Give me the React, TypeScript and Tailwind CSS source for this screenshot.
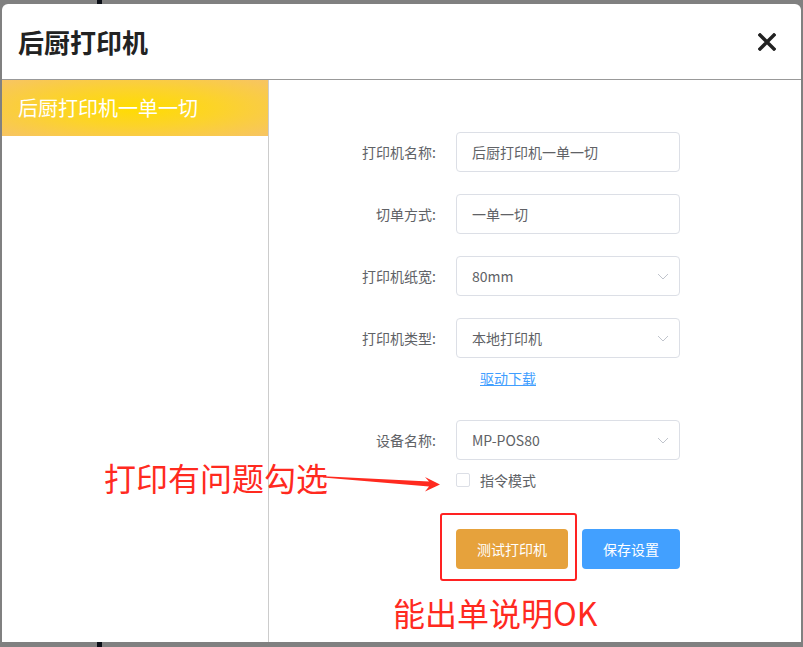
import React from "react";

const font = { fontFamily: '"Noto Sans CJK SC", "Noto Sans", sans-serif' };

function Chevron() {
  return (
    <svg width="12" height="7" viewBox="0 0 12 7" className="ml-auto mr-[10px]">
      <path d="M1 1 L6 6 L11 1" fill="none" stroke="#c0c4cc" strokeWidth="1" />
    </svg>
  );
}

function Row({ label, value, select }: { label: string; value: string; select?: boolean }) {
  return (
    <div className="flex items-center h-[40px]">
      <div className="w-[100px] text-right text-[14px] text-[#606266] leading-none">{label}</div>
      <div className="ml-[20px] w-[224px] h-[40px] border border-[#dcdfe6] rounded-[4px] flex items-center pl-[15px] text-[14px] text-[#606266]">
        <span>{value}</span>
        {select && <Chevron />}
      </div>
    </div>
  );
}

export default function App() {
  return (
    <div className="relative w-[803px] h-[647px] bg-[#808080] overflow-hidden pt-[4px] pl-[2px]" style={font}>
      <div className="absolute left-[97px] top-0 w-[5px] h-[647px] bg-[#0b0f17]" />
      <div className="relative w-[799px] h-[638px] bg-white rounded-t-[6px] flex flex-col">
        <div className="h-[76px] shrink-0 border-b border-[#999] flex items-center justify-between pl-[16px] pr-[25px]">
          <div className="text-[26px] font-bold text-[#222] leading-none">后厨打印机</div>
          <svg width="18" height="18" viewBox="0 0 18 18">
            <path d="M2 2 L16 16 M16 2 L2 16" stroke="#222" strokeWidth="3.4" strokeLinecap="square" />
          </svg>
        </div>
        <div className="flex flex-1">
          <div className="w-[267px] border-r border-[#ccc] shrink-0">
            <div className="h-[56px] flex items-center pl-[16px] text-white text-[20px] bg-[radial-gradient(ellipse_at_center,#ffdc00_0%,#fcd32a_45%,#f7c464_100%)]">
              后厨打印机一单一切
            </div>
          </div>
          <div className="flex-1 pl-[67px] pt-[52px]">
            <div className="flex flex-col gap-[22px]">
              <Row label="打印机名称:" value="后厨打印机一单一切" />
              <Row label="切单方式:" value="一单一切" />
              <Row label="打印机纸宽:" value="80mm" select />
              <Row label="打印机类型:" value="本地打印机" select />
            </div>
            <div className="mt-[10px] h-[20px] flex items-center pl-[144px]">
              <span className="text-[14px] text-[#409eff] underline leading-none">驱动下载</span>
            </div>
            <div className="mt-[32px]">
              <Row label="设备名称:" value="MP-POS80" select />
            </div>
            <div className="mt-[12px] h-[16px] flex items-center pl-[120px]">
              <div className="w-[14px] h-[14px] border border-[#dcdfe6] rounded-[2px] bg-white" />
              <span className="ml-[10px] text-[14px] text-[#606266] leading-none">指令模式</span>
            </div>
            <div className="mt-[41px] flex pl-[120px] gap-[14px]">
              <div className="w-[112px] h-[40px] rounded-[4px] bg-[#e6a23c] text-white text-[14px] flex items-center justify-center">
                测试打印机
              </div>
              <div className="w-[98px] h-[40px] rounded-[4px] bg-[#42a0ff] text-white text-[14px] flex items-center justify-center">
                保存设置
              </div>
            </div>
          </div>
        </div>
      </div>

      {/* annotations */}
      <div className="absolute left-[440px] top-[513px] w-[137px] h-[68px] border-2 border-[#ff2222] rounded-[3px]" />
      <div className="absolute left-[104px] top-[461px] text-[32px] leading-none text-[#ff2a1f]">打印有问题勾选</div>
      <svg className="absolute left-0 top-0" width="803" height="647" viewBox="0 0 803 647" style={{ pointerEvents: "none" }}>
        <polygon
          points="323,476.3 429,481.6 425,477 440,484.5 425,491.5 429,486.4 323,477.6"
          fill="#ff2a1f"
        />
      </svg>
      <div className="absolute left-[393px] top-[596px] text-[32px] leading-none text-[#ff2a1f]">能出单说明OK</div>
    </div>
  );
}
